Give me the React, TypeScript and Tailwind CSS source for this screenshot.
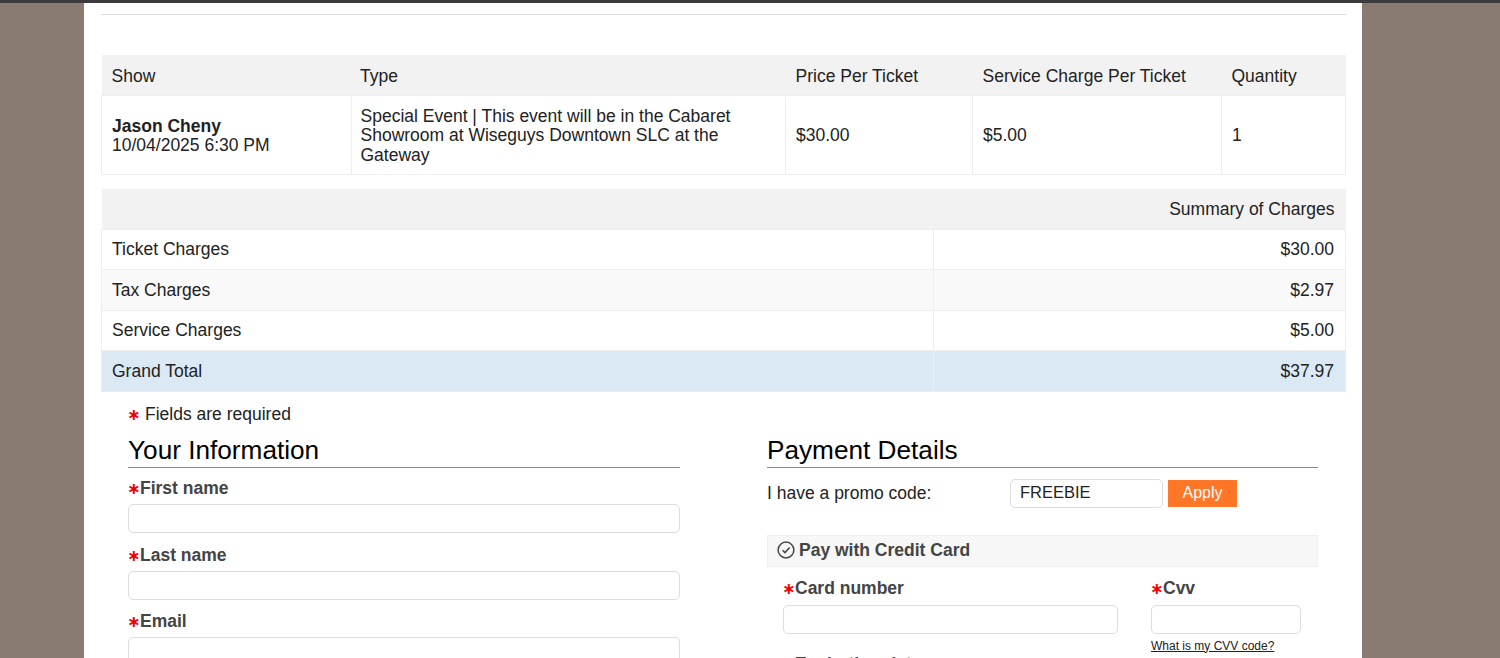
import React from "react";

const Req = ({ gap }: { gap?: string }) => (
  <span className={`inline-block w-[13px] ml-[-1px] text-[#f00000] font-bold text-[16px] [font-family:'DejaVu_Sans',sans-serif] ${gap ?? ""}`}>
    {"\u2217"}
  </span>
);

const Field = ({ label, className, inputGap }: { label: string; className?: string; inputGap?: string }) => (
  <div className={className}>
    <label className="block h-[24px] leading-[24px] font-bold text-[#444444]">
      <Req />
      {label}
    </label>
    <input className={`block w-full h-[29px] bg-white border border-[#dddddd] rounded-[5px] ${inputGap ?? "mt-[4px]"}`} />
  </div>
);

const summary = [
  { label: "Ticket Charges", value: "$30.00", row: "bg-white" },
  { label: "Tax Charges", value: "$2.97", row: "bg-[#f9f9f9]" },
  { label: "Service Charges", value: "$5.00", row: "bg-white" },
  { label: "Grand Total", value: "$37.97", row: "bg-[#dbe9f4]" },
];

export default function App() {
  return (
    <div className="h-[658px] overflow-hidden bg-[#8a7b72] border-t-[3px] border-[#3b3b3d] [font-family:'Liberation_Sans',Arial,sans-serif] text-[17.5px] text-[#222222]">
      <div className="mx-[84px] w-[1278px] h-full bg-white pl-[17px] pr-[16px] pt-[11px]">
        <hr className="border-t border-[#dddddd]" />

        <table className="mt-[40px] w-full table-fixed border-collapse">
          <colgroup>
            <col className="w-[249.5px]" />
            <col className="w-[434.5px]" />
            <col className="w-[187px]" />
            <col className="w-[249px]" />
            <col />
          </colgroup>
          <thead>
            <tr className="h-[40.5px] bg-[#f2f2f2] text-left">
              <th className="px-[10px] pt-[2px] font-normal">Show</th>
              <th className="px-[9px] pt-[2px] font-normal">Type</th>
              <th className="px-[10px] pt-[2px] font-normal">Price Per Ticket</th>
              <th className="px-[10px] pt-[2px] font-normal">Service Charge Per Ticket</th>
              <th className="px-[10px] pt-[2px] font-normal">Quantity</th>
            </tr>
          </thead>
          <tbody>
            <tr className="h-[79px] leading-[19.5px]">
              <td className="px-[10px] pt-[2px] border border-[#eeeeee]">
                <b>Jason Cheny</b>
                <br />
                10/04/2025 6:30 PM
              </td>
              <td className="px-[9px] pt-[2px] border border-[#eeeeee]">
                Special Event | This event will be in the Cabaret Showroom at Wiseguys Downtown SLC at the Gateway
              </td>
              <td className="px-[10px] pt-[2px] border border-[#eeeeee]">$30.00</td>
              <td className="px-[10px] pt-[2px] border border-[#eeeeee]">$5.00</td>
              <td className="px-[10px] pt-[2px] border border-[#eeeeee]">1</td>
            </tr>
          </tbody>
        </table>

        <table className="mt-[14px] w-full table-fixed border-collapse">
          <colgroup>
            <col className="w-[832px]" />
            <col />
          </colgroup>
          <thead>
            <tr className="h-[40px] bg-[#f2f2f2]">
              <th colSpan={2} className="px-[11px] text-right font-normal">
                Summary of Charges
              </th>
            </tr>
          </thead>
          <tbody>
            {summary.map((s) => (
              <tr key={s.label} className={`h-[40.5px] ${s.row}`}>
                <td className="px-[10px] border border-[#eeeeee]">{s.label}</td>
                <td className="px-[11px] text-right border border-[#eeeeee]">{s.value}</td>
              </tr>
            ))}
          </tbody>
        </table>

        <div className="px-[27px]">
          <p className="h-[24px] mt-[10px] leading-[24px]">
            <Req gap="mr-[5px]" />
            Fields are required
          </p>

          <div className="grid grid-cols-[552px_551px] gap-x-[87px]">
            <div>
              <h2 className="h-[43px] leading-[50px] text-[26.2px] text-black border-b border-[#888888] mt-[-1px]">
                Your Information
              </h2>
              <Field label="First name" className="mt-[8px]" />
              <Field label="Last name" className="mt-[10px]" />
              <Field label="Email" className="mt-[9px]" />
            </div>

            <div>
              <h2 className="h-[43px] leading-[50px] text-[26.2px] text-black border-b border-[#888888] mt-[-1px]">
                Payment Details
              </h2>
              <div className="flex items-center mt-[11px] h-[29px]">
                <span className="w-[243px]">I have a promo code:</span>
                <input
                  defaultValue="FREEBIE"
                  className="w-[153px] h-[29px] px-[9px] pb-[2px] text-[16.5px] bg-white border border-[#dddddd] rounded-[5px]"
                />
                <button className="ml-[5px] w-[69px] h-[27px] bg-[#ff7626] text-white text-[16px]">Apply</button>
              </div>

              <div className="flex items-center mt-[27px] h-[32px] px-[9px] bg-[#f7f7f7] border border-[#f0f0f0] font-bold text-[#444444]">
                <svg viewBox="0 0 18 18" className="w-[18px] h-[18px] mr-[4px] mt-[-2px]" fill="none" stroke="#444444" strokeWidth="1.5">
                  <circle cx="9" cy="9" r="7.9" />
                  <path d="M5.6 9.2l2.4 2.4 4.6-5" />
                </svg>
                Pay with Credit Card
              </div>

              <div className="grid grid-cols-[335px_150px] gap-x-[33px] pl-[16px] mt-[9px]">
                <Field label="Card number" inputGap="mt-[5px]" />
                <div>
                  <Field label="Cvv" inputGap="mt-[5px]" />
                  <a className="block mt-[3px] text-[12px] text-[#222222] underline">What is my CVV code?</a>
                </div>
              </div>
              <Field label="Expiration date" className="pl-[16px] mt-[-3px]" />
            </div>
          </div>
        </div>
      </div>
    </div>
  );
}
